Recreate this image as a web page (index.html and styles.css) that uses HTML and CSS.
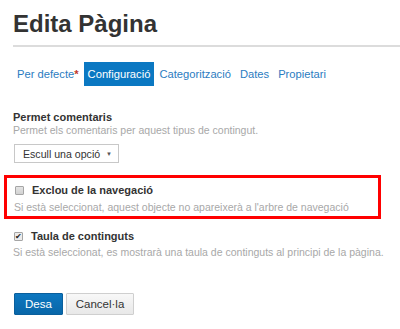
FILE: index.html
```html
<!DOCTYPE html>
<html lang="ca">
<head>
    <meta charset="UTF-8">
    <meta name="viewport" content="width=device-width, initial-scale=1.0">
    <title>Edita Pàgina</title>
    <link rel="stylesheet" href="styles.css">
</head>
<body>
    <div class="container">
        <h1>Edita Pàgina</h1>

        <!-- pestanyes del formulari -->
        <nav class="tabs">
            <a href="#" class="tab">Per defecte<span class="required">*</span></a>
            <a href="#" class="tab active">Configuració</a>
            <a href="#" class="tab">Categorització</a>
            <a href="#" class="tab">Dates</a>
            <a href="#" class="tab">Propietari</a>
        </nav>

        <div class="field">
            <div class="field-label">Permet comentaris</div>
            <div class="field-help">Permet els comentaris per aquest tipus de contingut.</div>
            <div class="select">Escull una opció <span class="select-arrow">&#9660;</span></div>
        </div>

        <div class="field highlight">
            <div class="check-row">
                <span class="checkbox"></span>
                <span class="field-label">Exclou de la navegació</span>
            </div>
            <div class="field-help">Si està seleccionat, aquest objecte no apareixerà a l'arbre de navegació</div>
        </div>

        <div class="field toc">
            <div class="check-row">
                <span class="checkbox checked">&#10004;</span>
                <span class="field-label">Taula de continguts</span>
            </div>
            <div class="field-help">Si està seleccionat, es mostrarà una taula de continguts al principi de la pàgina.</div>
        </div>

        <div class="button-group">
            <button class="btn btn-save">Desa</button>
            <button class="btn btn-cancel">Cancel·la</button>
        </div>
    </div>
</body>
</html>
```

FILE: styles.css
```css
body {
    margin: 0;
    font-family: 'Liberation Sans', Arial, sans-serif;
    background-color: #ffffff;
    color: #333;
}
.container {
    padding: 0 0 0 13px;
}
h1 {
    margin: 0;
    padding: 10px 0 7px 0;
    font-size: 24px;
    line-height: 28px;
    font-weight: bold;
    color: #333;
    border-bottom: 2px solid #dcdcdc;
}
.tabs {
    display: flex;
    gap: 1px;
    margin-top: 15px;
    height: 24px;
}
.tab {
    display: flex;
    align-items: center;
    padding: 0 4px;
    font-size: 11.2px;
    color: #2b7cc1;
    text-decoration: none;
}
.tab.active {
    background-color: #0b78c2;
    color: #fff;
}
.required {
    color: #c0392b;
    font-weight: bold;
}
.field {
    margin-top: 25px;
}
.field-label {
    font-size: 11px;
    line-height: 13px;
    font-weight: bold;
    color: #333;
}
.field-help {
    font-size: 10.5px;
    line-height: 12px;
    color: #a8a8a8;
}
.select {
    display: inline-flex;
    align-items: center;
    justify-content: space-between;
    box-sizing: border-box;
    width: 105px;
    height: 19px;
    margin: 8px 0 0 1px;
    padding: 0 6px 0 8px;
    border: 1px solid #c8c8c8;
    font-size: 10.6px;
    color: #333;
    white-space: nowrap;
}
.select-arrow {
    font-size: 6px;
    color: #555;
}
.highlight {
    margin: 12px 19px 0 -9px;
    padding: 5px 0 3px 7px;
    border: 3px solid #ff0000;
}
.highlight .field-help {
    margin-top: 4px;
}
.check-row {
    display: flex;
    align-items: center;
    gap: 8px;
    height: 14px;
}
.checkbox {
    box-sizing: border-box;
    width: 9px;
    height: 9px;
    margin-left: 1px;
    border: 1px solid #a5a5a5;
    border-radius: 1px;
    background: linear-gradient(#e4e4e4, #d2d2d2);
    font-size: 8px;
    line-height: 7px;
    color: #222;
    text-align: center;
}
.checkbox.checked {
    background: #ececec;
}
.toc {
    margin-top: 10px;
}
.toc .field-help {
    margin-top: 3px;
}
.button-group {
    display: flex;
    gap: 3px;
    margin-top: 35px;
}
.btn {
    height: 22px;
    font-family: 'Liberation Sans', Arial, sans-serif;
    font-size: 11.5px;
    border-radius: 1px;
    cursor: pointer;
}
.btn-save {
    width: 49px;
    margin-left: 1px;
    color: #fff;
    border: 1px solid #0a5f9c;
    background: linear-gradient(#0c77c0, #0866a8);
}
.btn-cancel {
    width: 68px;
    color: #333;
    border: 1px solid #cfcfcf;
    background: linear-gradient(#f8f8f8, #e8e8e8);
}
```
